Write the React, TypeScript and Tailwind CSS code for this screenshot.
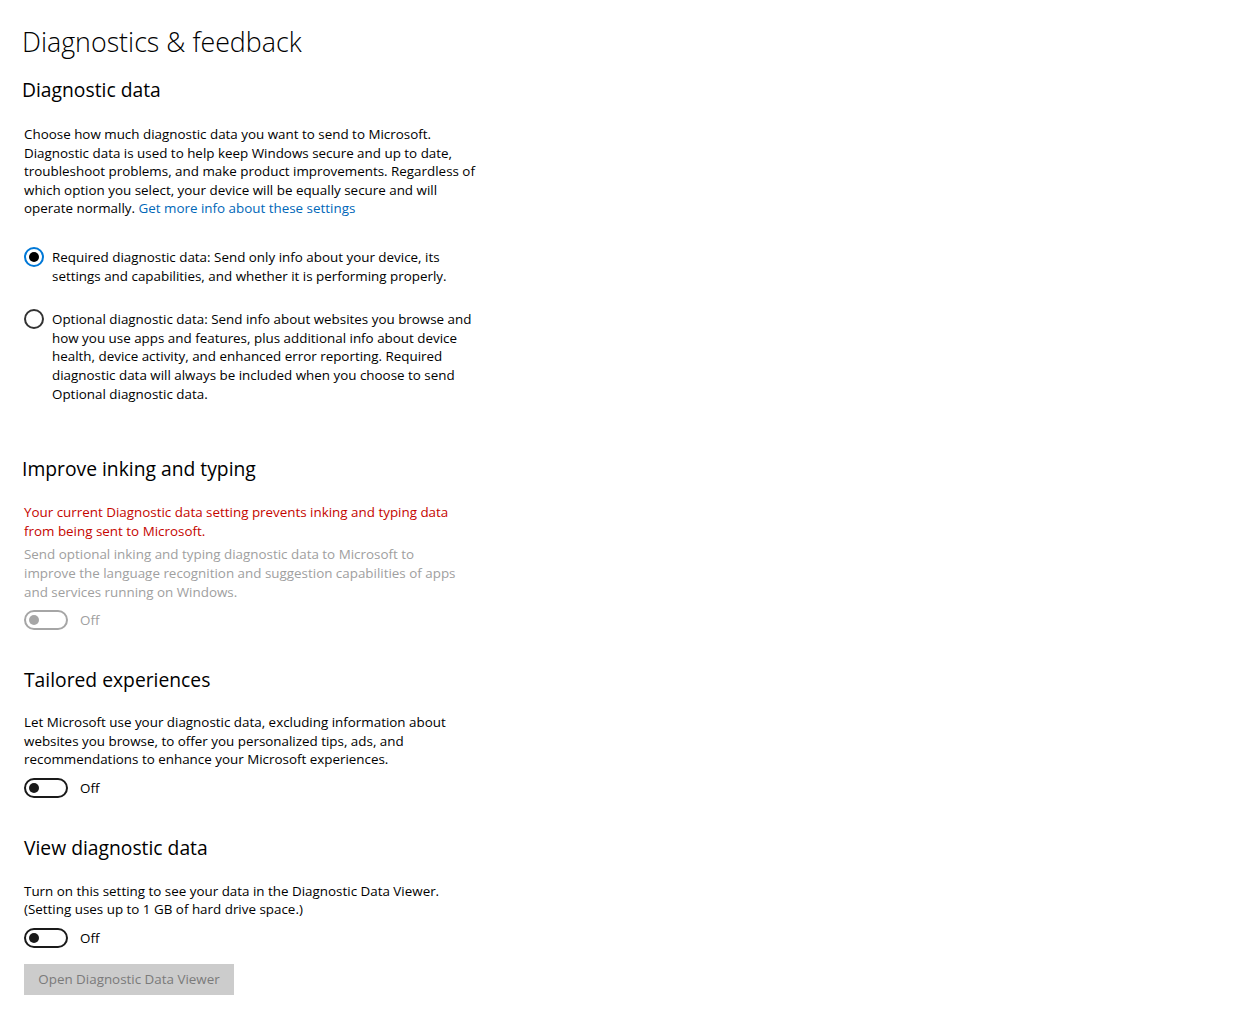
import React from 'react';

const font = { fontFamily: '"Segoe UI", "Open Sans", "Noto Sans", sans-serif' };

function Radio({ checked }: { checked: boolean }) {
  return (
    <span
      className={`mt-[-1px] flex h-5 w-5 shrink-0 items-center justify-center rounded-full border-2 ${
        checked ? 'border-[#0078d7]' : 'border-[#333333]'
      }`}
    >
      {checked && <span className="h-[10px] w-[10px] rounded-full bg-black" />}
    </span>
  );
}

function Toggle({ disabled }: { disabled?: boolean }) {
  return (
    <div className="flex items-center gap-3">
      <span
        className={`flex h-5 w-11 items-center rounded-full border-2 px-[3px] ${
          disabled ? 'border-[#a6a6a6]' : 'border-[#1a1a1a]'
        }`}
      >
        <span className={`h-[10px] w-[10px] rounded-full ${disabled ? 'bg-[#a6a6a6]' : 'bg-[#1a1a1a]'}`} />
      </span>
      <span className={`text-[13.4px] ${disabled ? 'text-[#a0a0a0]' : 'text-black'}`}>Off</span>
    </div>
  );
}

export default function App() {
  return (
    <div className="min-h-screen bg-white text-black" style={font}>
      <div className="flex flex-col pl-[24px] pt-[24px] text-[13.4px] leading-[18.6px]">
        <h1 className="-ml-[2px] text-[26.8px] font-light leading-[36px]">Diagnostics &amp; feedback</h1>
        <h2 className="-ml-[2px] mt-[16px] text-[19.3px] leading-[28px]">Diagnostic data</h2>

        <p className="mt-[21px]">
          Choose how much diagnostic data you want to send to Microsoft.
          <br />
          Diagnostic data is used to help keep Windows secure and up to date,
          <br />
          troubleshoot problems, and make product improvements. Regardless of
          <br />
          which option you select, your device will be equally secure and will
          <br />
          operate normally. <span className="text-[#0067b8]">Get more info about these settings</span>
        </p>

        <div className="mt-[30px] flex gap-[8px]">
          <Radio checked />
          <p>
            Required diagnostic data: Send only info about your device, its
            <br />
            settings and capabilities, and whether it is performing properly.
          </p>
        </div>

        <div className="mt-[25px] flex gap-[8px]">
          <Radio checked={false} />
          <p>
            Optional diagnostic data: Send info about websites you browse and
            <br />
            how you use apps and features, plus additional info about device
            <br />
            health, device activity, and enhanced error reporting. Required
            <br />
            diagnostic data will always be included when you choose to send
            <br />
            Optional diagnostic data.
          </p>
        </div>

        <h2 className="-ml-[2px] mt-[52px] text-[19.3px] leading-[28px]">Improve inking and typing</h2>
        <p className="mt-[20px] text-[#c50500]">
          Your current Diagnostic data setting prevents inking and typing data
          <br />
          from being sent to Microsoft.
        </p>
        <p className="mt-[5px] text-[#a0a0a0]">
          Send optional inking and typing diagnostic data to Microsoft to
          <br />
          improve the language recognition and suggestion capabilities of apps
          <br />
          and services running on Windows.
        </p>
        <div className="mt-[9px]">
          <Toggle disabled />
        </div>

        <h2 className="mt-[36px] text-[19.3px] leading-[28px]">Tailored experiences</h2>
        <p className="mt-[19px]">
          Let Microsoft use your diagnostic data, excluding information about
          <br />
          websites you browse, to offer you personalized tips, ads, and
          <br />
          recommendations to enhance your Microsoft experiences.
        </p>
        <div className="mt-[9px]">
          <Toggle />
        </div>

        <h2 className="mt-[36px] text-[19.3px] leading-[28px]">View diagnostic data</h2>
        <p className="mt-[20px]">
          Turn on this setting to see your data in the Diagnostic Data Viewer.
          <br />
          (Setting uses up to 1 GB of hard drive space.)
        </p>
        <div className="mt-[9px]">
          <Toggle />
        </div>
        <button className="mt-[16px] h-[31px] w-[210px] bg-[#cccccc] text-[13.4px] text-[#7a7a7a]">
          Open Diagnostic Data Viewer
        </button>
      </div>
    </div>
  );
}
